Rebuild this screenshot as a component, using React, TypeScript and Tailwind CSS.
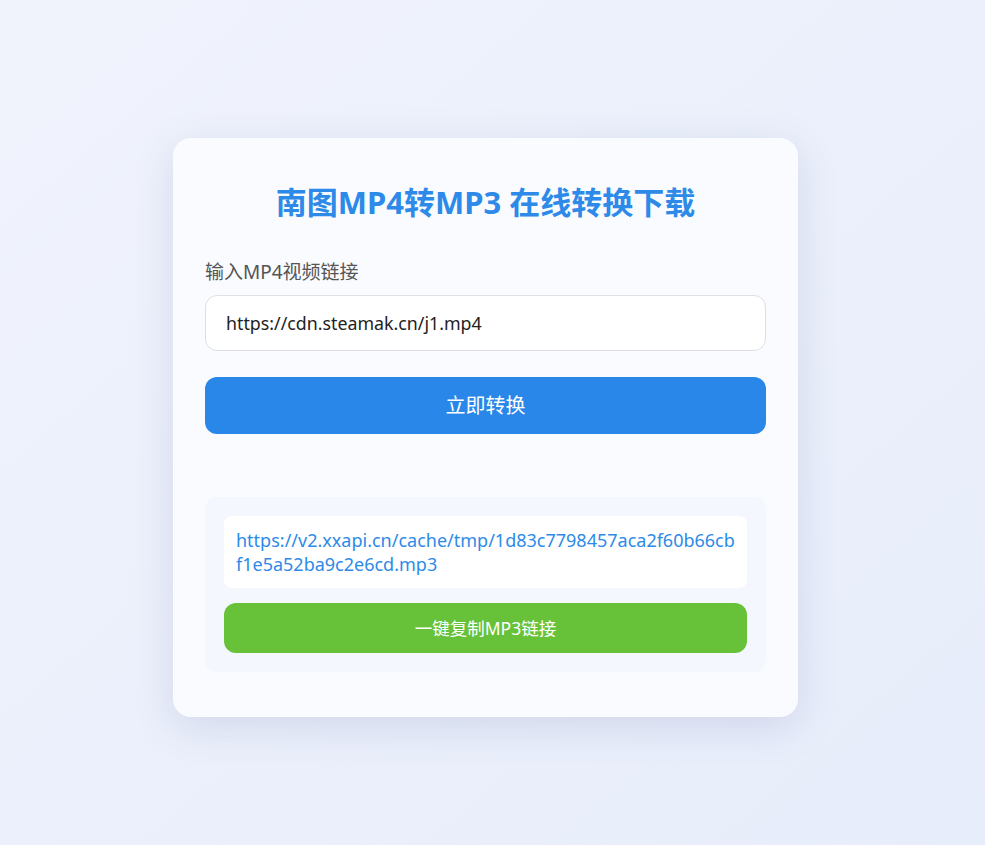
export default function App() {
  const mp3 = 'https://v2.xxapi.cn/cache/tmp/1d83c7798457aca2f60b66cbf1e5a52ba9c2e6cd.mp3'

  return (
    <div
      className="min-h-[845px] w-full bg-gradient-to-br from-[#f0f3fc] to-[#e8edfb] pt-[138px] pr-[14px]"
      style={{ fontFamily: '"Noto Sans", "Noto Sans CJK SC", sans-serif' }}
    >
      <div className="mx-auto w-[625px] rounded-[18px] bg-[#f9fbfe] px-8 pt-[44px] pb-[45px] shadow-[0_10px_40px_rgba(60,80,140,0.15)]">
        <h1 className="text-center text-[31px] font-bold leading-[40px] text-[#2d8ae8]">南图MP4转MP3 在线转换下载</h1>

        <label className="mt-[37px] block text-[19px] leading-[26px] text-[#555]">输入MP4视频链接</label>
        <input
          defaultValue="https://cdn.steamak.cn/j1.mp4"
          className="mt-[10px] h-[56px] w-full rounded-xl border border-[#dcdfe6] bg-white px-5 text-[17.8px] text-[#222] outline-none"
        />

        <button className="mt-[26px] h-[57px] w-full rounded-xl bg-[#2887e8] text-[20px] text-white">立即转换</button>

        <div className="mt-[63px] rounded-xl bg-[#f4f7fe] p-[19px]">
          <div className="rounded-lg bg-white px-3 py-[12px] text-[18px] leading-[24px] break-all text-[#2d8ae8]">{mp3}</div>
          <button className="mt-[15px] h-[50px] w-full rounded-xl bg-[#67c23a] text-[17.5px] text-white">一键复制MP3链接</button>
        </div>
      </div>
    </div>
  )
}
